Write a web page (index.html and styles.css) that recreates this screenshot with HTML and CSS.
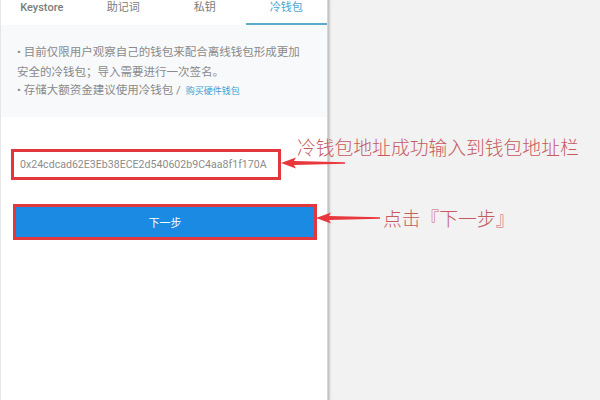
FILE: index.html
```html
<!DOCTYPE html>
<html lang="zh-CN">
<head>
    <meta charset="UTF-8">
    <meta name="viewport" content="width=device-width, initial-scale=1.0">
    <title>冷钱包导入</title>
    <link rel="stylesheet" href="styles.css">
</head>
<body>
    <div class="phone">
        <div class="tabs">
            <div class="tab">Keystore</div>
            <div class="tab">助记词</div>
            <div class="tab">私钥</div>
            <div class="tab active">冷钱包</div>
        </div>
        <div class="notice">
            <p class="first">• 目前仅限用户观察自己的钱包来配合离线钱包形成更加安全的冷钱包；导入需要进行一次签名。</p>
            <p class="second">• 存储大额资金建议使用冷钱包 / <a class="link" href="#">购买硬件钱包</a></p>
        </div>
        <div class="form">
            <div class="mark mark-input">
                <div class="address">0x24cdcad62E3Eb38ECE2d540602b9C4aa8f1f170A</div>
            </div>
            <div class="mark mark-btn">
                <button class="next">下一步</button>
            </div>
        </div>
    </div>

    <!-- annotations drawn over the screenshot -->
    <svg class="arrow arrow-1" width="66" height="12" viewBox="0 0 66 12">
        <polygon points="0,6 15,0.5 13,4 64,5.2 64,6.8 13,8 15,11.5" fill="#e8383d"/>
    </svg>
    <div class="note note-1">冷钱包地址成功输入到钱包地址栏</div>

    <svg class="arrow arrow-2" width="66" height="12" viewBox="0 0 66 12">
        <polygon points="0,6 15,0.5 13,4 64,5.2 64,6.8 13,8 15,11.5" fill="#e8383d"/>
    </svg>
    <div class="note note-2">点击『下一步』</div>
</body>
</html>
```

FILE: styles.css
```css
body {
    margin: 0;
    width: 600px;
    height: 400px;
    overflow: hidden;
    background: #f2f2f2;
    font-family: Roboto, "Noto Sans CJK SC", sans-serif;
    position: relative;
}
.phone {
    width: 327px;
    height: 400px;
    background: #fff;
    border-left: 1px solid #e6e6e6;
    box-sizing: border-box;
    box-shadow: 1px 0 0 #d6d6d6, 2px 0 0 #c4c4c4, 3px 0 0 #d2d2d2, 4px 0 2px #e6e6e6;
}
.tabs {
    display: flex;
    height: 25px;
    background: #fff;
}
.tab {
    flex: 1;
    text-align: center;
    font-size: 11px;
    line-height: 16px;
    color: #7c7c7c;
    box-sizing: border-box;
}
.tab:first-child {
    font-weight: 500;
}
.tab.active {
    color: #48a6cf;
    border-bottom: 2px solid #5aabcc;
    height: 25px;
}
.notice {
    background: #f7f9fb;
    padding: 17px 22px 18px 16px;
    font-size: 11.5px;
    color: #8a8a8a;
}
.notice p {
    margin: 0;
}
.notice .first {
    line-height: 20px;
}
.notice .second {
    line-height: 16px;
}
.link {
    color: #3f9ed2;
    font-size: 9px;
    text-decoration: none;
    margin-left: 2px;
}
.form {
    padding: 32px 0 0 10px;
}
.mark {
    border: 3px solid #e2373d;
    box-sizing: border-box;
}
.mark-input {
    width: 270px;
    height: 31px;
    background: #fff;
    display: flex;
    align-items: center;
    padding-left: 6px;
}
.address {
    font-size: 10.6px;
    color: #8c8c8c;
}
.mark-btn {
    width: 304px;
    height: 36px;
    margin: 24px 0 0 2px;
}
.next {
    display: block;
    width: 100%;
    height: 100%;
    border: none;
    background: #1b8ae3;
    color: #fff;
    font-family: "Noto Sans CJK SC", sans-serif;
    font-size: 11px;
    padding: 0;
}
.arrow {
    position: absolute;
    display: block;
}
.arrow-1 {
    left: 281px;
    top: 157px;
}
.arrow-2 {
    left: 316px;
    top: 212px;
}
.note {
    position: absolute;
    font-family: "Noto Sans CJK SC", sans-serif;
    font-weight: 300;
    font-size: 18.8px;
    line-height: 22px;
    color: #c65a5f;
    white-space: nowrap;
}
.note-1 {
    left: 297px;
    top: 136px;
}
.note-2 {
    left: 383px;
    top: 207px;
}
```
